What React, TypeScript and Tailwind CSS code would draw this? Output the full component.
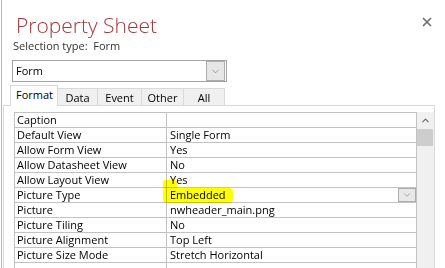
import { ChevronDown, ChevronUp } from 'lucide-react';

const ROWS: [string, string][] = [
  ['Caption', ''],
  ['Default View', 'Single Form'],
  ['Allow Form View', 'Yes'],
  ['Allow Datasheet View', 'No'],
  ['Allow Layout View', 'Yes'],
  ['Picture Type', 'Embedded'],
  ['Picture', 'nwheader_main.png'],
  ['Picture Tiling', 'No'],
  ['Picture Alignment', 'Top Left'],
  ['Picture Size Mode', 'Stretch Horizontal'],
  ['', ''],
  ['', ''],
];

const TABS = [
  { label: 'Data', w: 'w-[40px]' },
  { label: 'Event', w: 'w-[44px]' },
  { label: 'Other', w: 'w-[42px]' },
  { label: 'All', w: 'w-[41px]' },
];

export default function App() {
  return (
    <div className="relative w-[445px] h-[268px] overflow-hidden bg-white flex text-[#1a1a1a] font-['Open_Sans',sans-serif]">
      <div className="w-px shrink-0" />
      <div className="flex-1 flex flex-col border-l border-[#b9b9b9]">
        {/* header */}
        <div className="flex items-start justify-between mt-[14px] pl-[14px] pr-[13px]">
          <h1 className="text-[21px] leading-[22px] font-light text-[#a4373a]">Property Sheet</h1>
          <svg width="10" height="10" viewBox="0 0 10 10" className="mt-[3px]">
            <path d="M1 1 L9 9 M9 1 L1 9" stroke="#6b6b6b" strokeWidth="1.6" />
          </svg>
        </div>
        <div className="pl-[11px] mt-[3px] text-[11px] leading-[13px] text-[#333]">Selection type:&nbsp; Form</div>

        {/* combo */}
        <div className="ml-[10px] mt-[8px] w-[215px] h-[24px] border border-[#a3a3a3] flex items-center">
          <span className="flex-1 pl-[3px] text-[11px] leading-[16px] text-black">Form</span>
          <div className="w-[19px] h-[20px] mr-px border border-[#acacac] bg-[#e6e6e6] flex items-center justify-center">
            <ChevronDown size={11} strokeWidth={1.3} className="text-[#6d6d6d]" />
          </div>
        </div>

        {/* tabs */}
        <div className="ml-[8px] mt-[3px] flex items-end h-[20px] text-[11px] text-black">
          <div className="relative z-10 w-[48px] h-[21px] -mb-px border-l border-t border-r border-[#d9d9d9] bg-white pl-[5px] pt-px leading-[16px]">
            Format
          </div>
          {TABS.map(t => (
            <div key={t.label} className={`${t.w} h-[17px] border-t border-r border-[#d9d9d9] bg-[#f0f0f0] flex justify-center pt-[2px] leading-[13px]`}>
              {t.label}
            </div>
          ))}
        </div>

        {/* panel */}
        <div className="ml-px w-[432px] flex-1 border-l border-t border-r border-[#d9d9d9] pt-[6px] pl-[10px] flex items-start">
          <div className="w-[403px] border-l border-t border-r border-[#c2c2c2] text-[11px] leading-[14px] text-black">
            {ROWS.map(([k, v], i) => (
              <div key={i} className="flex h-[15px] border-b border-[#c2c2c2]">
                <div className="w-[152px] border-r border-[#c2c2c2] pl-[2px] whitespace-nowrap">{k}</div>
                <div className="flex-1 pl-[3px] flex whitespace-nowrap">
                  <span className="flex-1">{v}</span>
                  {k === 'Picture Type' && (
                    <div className="w-[18px] h-[14px] border border-[#adadad] bg-[#e8e8e8] flex items-center justify-center">
                      <ChevronDown size={10} strokeWidth={1.3} className="text-[#6d6d6d]" />
                    </div>
                  )}
                </div>
              </div>
            ))}
          </div>
          <div className="w-[17px] h-[160px] bg-[#f0f0f0] flex flex-col">
            <div className="h-[17px] flex items-center justify-center">
              <ChevronUp size={11} strokeWidth={2.2} className="text-[#606060]" />
            </div>
            <div className="w-[16px] h-[17px] bg-[#cdcdcd]" />
          </div>
        </div>
      </div>

      {/* marker highlight over Picture Type value */}
      <div className="pointer-events-none absolute left-[163px] top-[188px] w-[70px] h-[15px] rounded-[4px] bg-[#ffff00] mix-blend-multiply blur-[0.6px]" />
      <div className="pointer-events-none absolute left-[163px] top-[180px] w-[14px] h-[10px] rounded-[3px] bg-[#ffff00] mix-blend-multiply blur-[0.6px]" />
    </div>
  );
}
